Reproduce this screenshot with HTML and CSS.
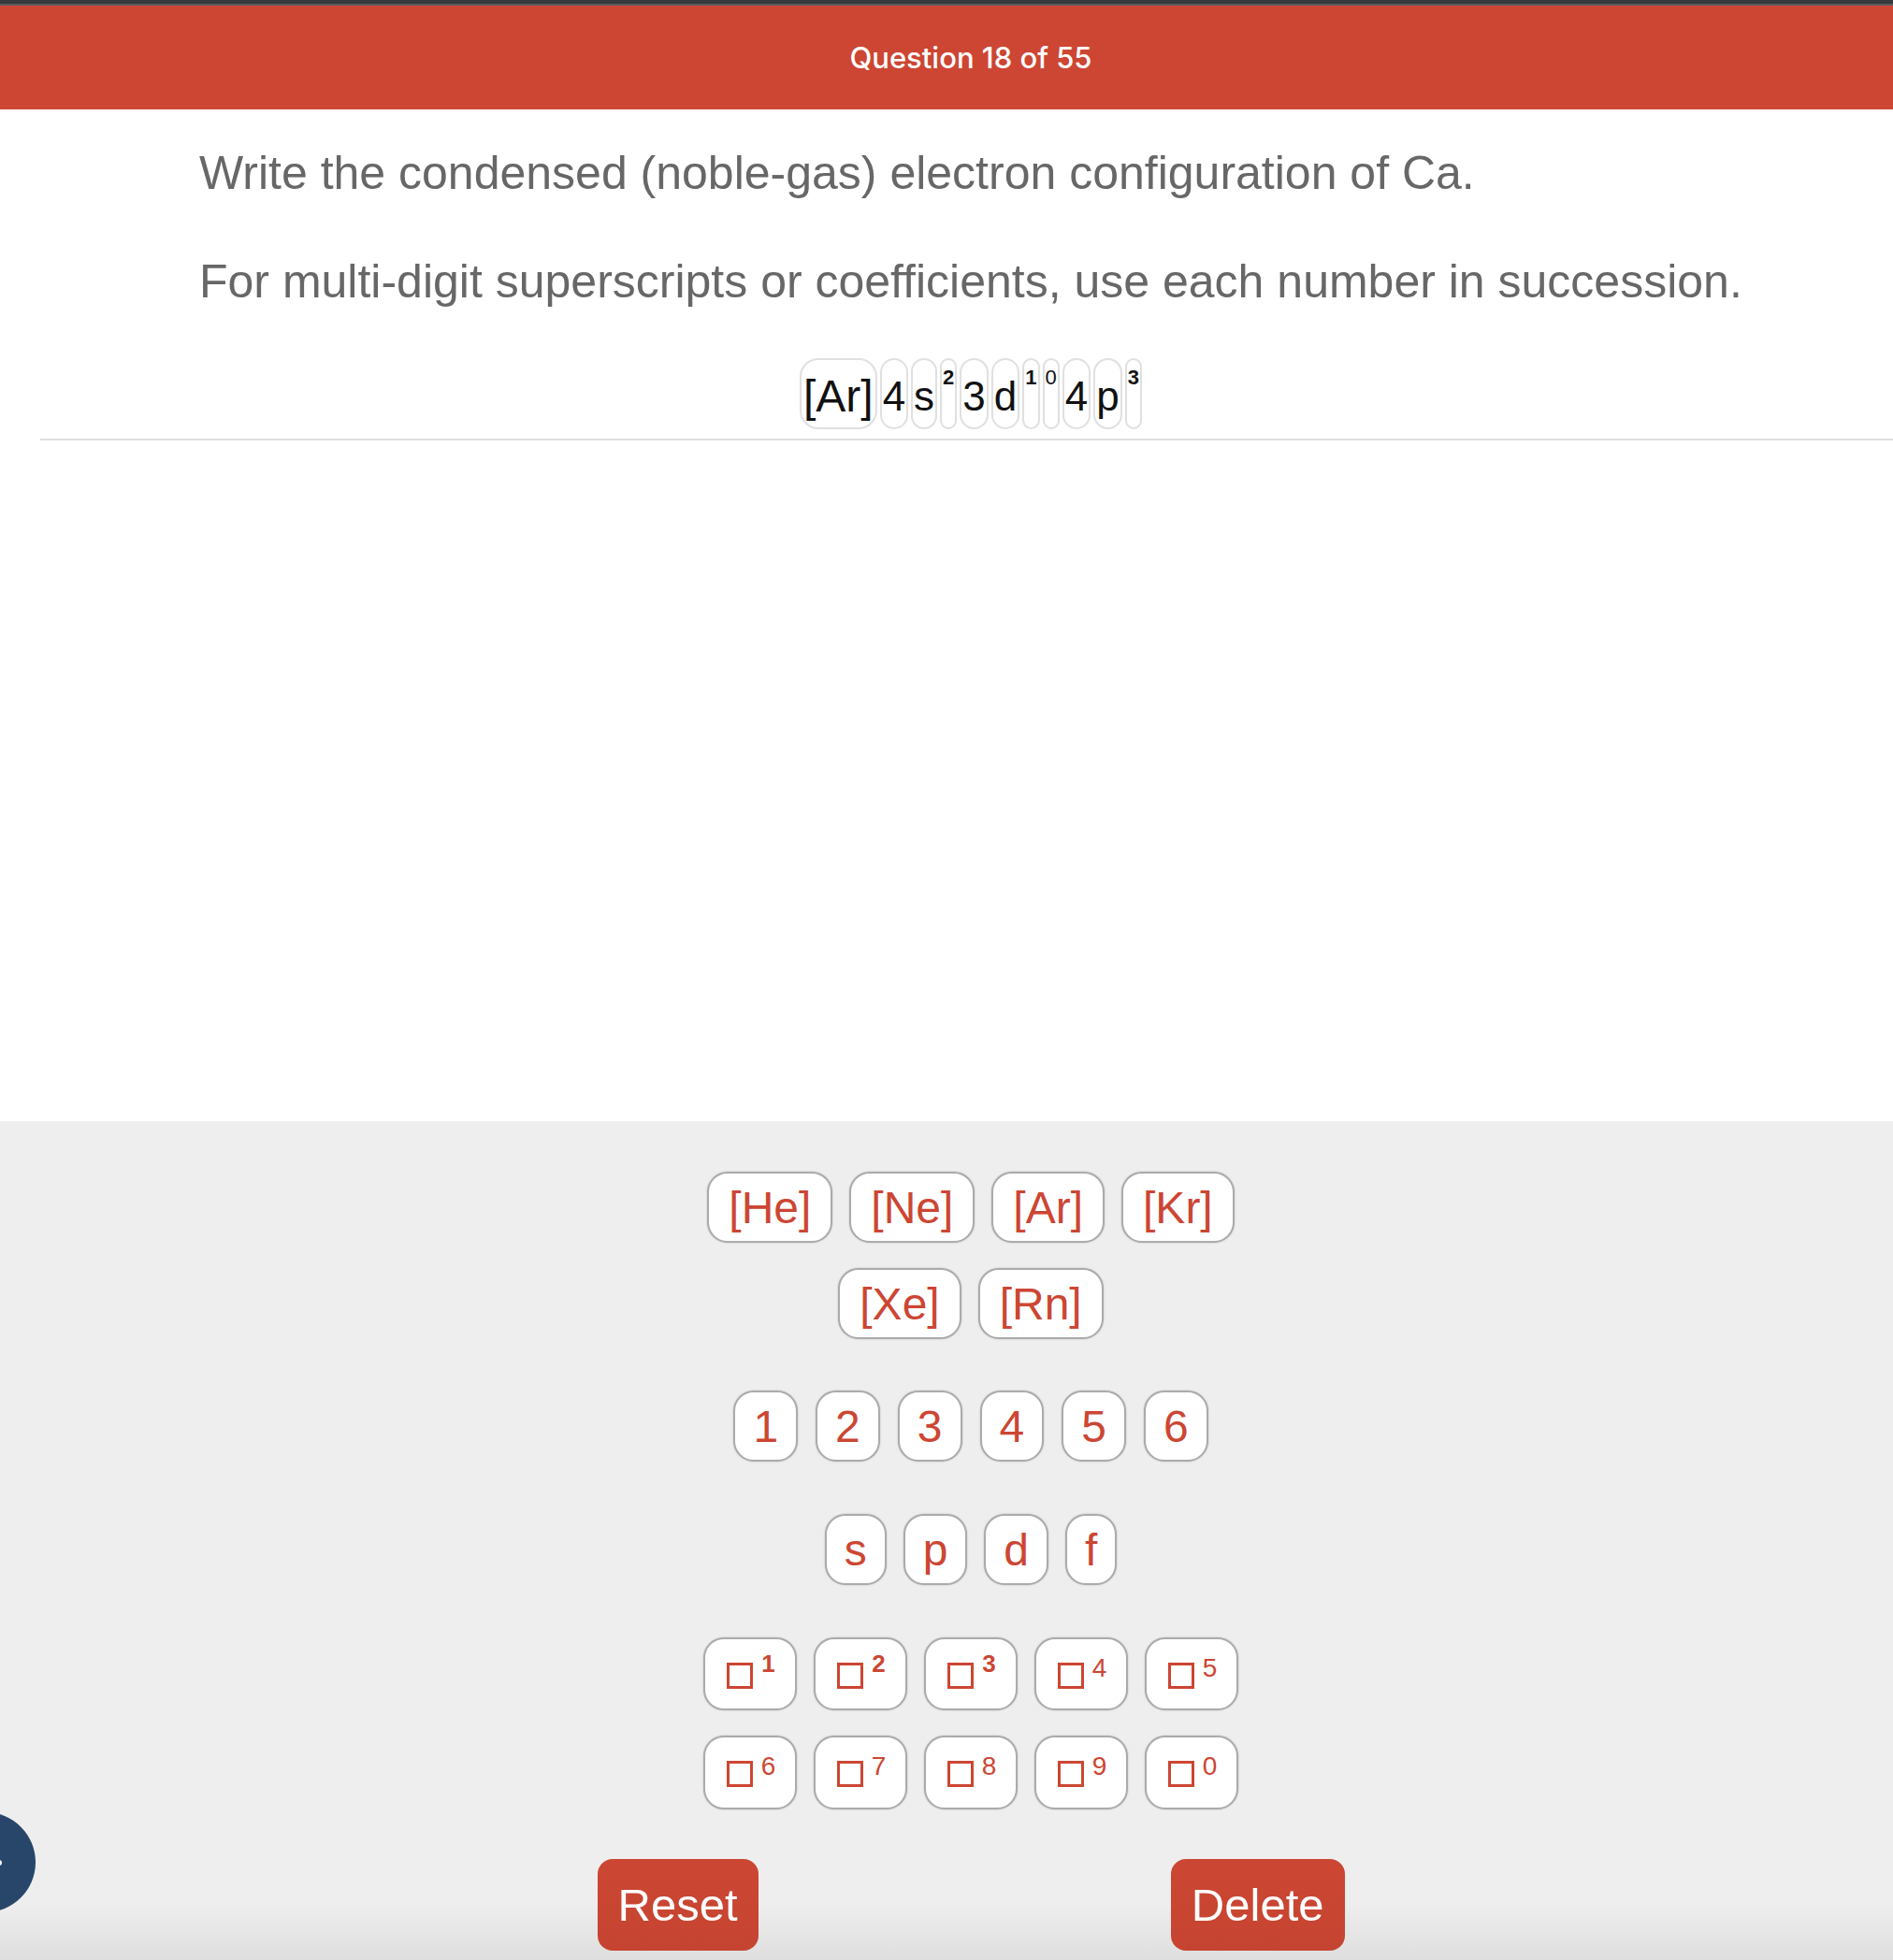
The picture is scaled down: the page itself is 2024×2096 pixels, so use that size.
FILE: index.html
```html
<!DOCTYPE html>
<html lang="en">
<head>
<meta charset="utf-8">
<title>Question 18 of 55</title>
<link rel="stylesheet" href="styles.css">
</head>
<body>
  <div class="topstrip"></div>
  <header class="header"><span class="header-title">Question 18 of 55</span></header>

  <main class="work">
    <p class="prompt prompt-first">Write the condensed (noble-gas) electron configuration of Ca.</p>
    <p class="prompt prompt-second">For multi-digit superscripts or coefficients, use each number in succession.</p>

    <div class="answer">
      <span class="cell cell-gas">[Ar]</span>
      <span class="cell">4</span>
      <span class="cell">s</span>
      <span class="cell cell-sup bold">2</span>
      <span class="cell">3</span>
      <span class="cell">d</span>
      <span class="cell cell-sup bold">1</span>
      <span class="cell cell-sup thin">0</span>
      <span class="cell">4</span>
      <span class="cell">p</span>
      <span class="cell cell-sup bold">3</span>
    </div>
    <div class="divider"></div>
  </main>

  <section class="keypad">
    <div class="row row-gas1">
      <button class="key key-gas">[He]</button>
      <button class="key key-gas">[Ne]</button>
      <button class="key key-gas">[Ar]</button>
      <button class="key key-gas">[Kr]</button>
    </div>
    <div class="row row-gas2">
      <button class="key key-gas">[Xe]</button>
      <button class="key key-gas">[Rn]</button>
    </div>
    <div class="row row-num">
      <button class="key key-single">1</button>
      <button class="key key-single">2</button>
      <button class="key key-single">3</button>
      <button class="key key-single">4</button>
      <button class="key key-single">5</button>
      <button class="key key-single">6</button>
    </div>
    <div class="row row-orb">
      <button class="key key-single">s</button>
      <button class="key key-single">p</button>
      <button class="key key-single">d</button>
      <button class="key key-single">f</button>
    </div>
    <div class="row row-sup1">
      <button class="key key-sup"><span class="sq"></span><span class="exp exp-bold">1</span></button>
      <button class="key key-sup"><span class="sq"></span><span class="exp exp-bold">2</span></button>
      <button class="key key-sup"><span class="sq"></span><span class="exp exp-bold">3</span></button>
      <button class="key key-sup"><span class="sq"></span><span class="exp exp-thin">4</span></button>
      <button class="key key-sup"><span class="sq"></span><span class="exp exp-thin">5</span></button>
    </div>
    <div class="row row-sup2">
      <button class="key key-sup"><span class="sq"></span><span class="exp exp-thin">6</span></button>
      <button class="key key-sup"><span class="sq"></span><span class="exp exp-thin">7</span></button>
      <button class="key key-sup"><span class="sq"></span><span class="exp exp-thin">8</span></button>
      <button class="key key-sup"><span class="sq"></span><span class="exp exp-thin">9</span></button>
      <button class="key key-sup"><span class="sq"></span><span class="exp exp-thin">0</span></button>
    </div>
    <div class="row row-actions">
      <button class="action">Reset</button>
      <button class="action">Delete</button>
    </div>
  </section>

  <div class="fab"><span class="fab-mark"></span></div>
</body>
</html>
```

FILE: styles.css
```css
* {
  box-sizing: border-box;
}

html, body {
  margin: 0;
  padding: 0;
}

body {
  min-height: 100vh;
  display: flex;
  flex-direction: column;
  font-family: "Liberation Sans", Arial, Helvetica, sans-serif;
  background: #ffffff;
  overflow: hidden;
}

.topstrip {
  height: 6px;
  background: linear-gradient(to bottom, #38393c 0, #38393c 4px, #5b5c5f 4px, #5b5c5f 6px);
}

.header {
  height: 111px;
  background: #cc4633;
  display: flex;
  align-items: center;
  justify-content: center;
  padding-left: 52px;
}

.header-title {
  font-family: Inter, "Liberation Sans", sans-serif;
  font-size: 31px;
  font-weight: 500;
  color: #ffffff;
}

.work {
  flex: 1;
  padding-left: 43px;
}

.prompt {
  margin: 0;
  padding-left: 170px;
  font-size: 50px;
  line-height: 60px;
  color: #676767;
}

.prompt-first {
  margin-top: 38px;
}

.prompt-second {
  margin-top: 56px;
}

.answer {
  margin-top: 52px;
  display: flex;
  justify-content: center;
  gap: 3px;
  padding-left: 9px;
}

.cell {
  display: block;
  height: 76px;
  padding: 0 1px;
  border: 2px solid #e0e0e0;
  border-radius: 16px;
  font-size: 44px;
  line-height: 78px;
  color: #111111;
  overflow: hidden;
}

.cell-gas {
  font-size: 48px;
  padding: 0 2px;
  border-radius: 20px;
}

.cell-sup {
  font-size: 22px;
  line-height: 22px;
  padding: 8px 1px 0;
  text-align: center;
}

.cell-sup.bold {
  font-weight: bold;
}

.cell-sup.thin {
  font-weight: normal;
}

.divider {
  margin-top: 10px;
  height: 2px;
  background: #dedede;
}

.keypad {
  background: linear-gradient(to bottom, #eeeeee 0, #eeeeee calc(100% - 60px), #dedede 100%);
  padding: 54px 0 10px 52px;
  display: flex;
  flex-direction: column;
  align-items: center;
}

.row {
  display: flex;
  justify-content: center;
  gap: 18px;
}

.row-gas2 {
  margin-top: 27px;
}

.row-num {
  margin-top: 55px;
  gap: 19px;
}

.row-orb {
  margin-top: 56px;
}

.row-sup1 {
  margin-top: 56px;
}

.row-sup2 {
  margin-top: 27px;
}

.row-actions {
  margin-top: 53px;
  width: 799px;
  justify-content: space-between;
}

.key {
  height: 76px;
  margin: 0;
  display: inline-flex;
  align-items: center;
  justify-content: center;
  background: #ffffff;
  border: 2px solid #ababab;
  border-radius: 22px;
  box-shadow: 0 0 2px rgba(0, 0, 0, 0.22);
  font-family: "Liberation Sans", Arial, Helvetica, sans-serif;
  font-size: 48px;
  color: #cc4633;
  cursor: pointer;
}

.key-gas {
  padding: 0 21px;
}

.key-single {
  padding: 0 19px;
}

.key-sup {
  width: 100px;
  height: 78px;
  padding: 0 0 0 2px;
  align-items: flex-start;
}

.row-sup2 .key-sup {
  height: 79px;
}

.sq {
  display: block;
  width: 28px;
  height: 28px;
  margin-top: 25px;
  border: 3px solid #cc4633;
}

.exp {
  display: block;
  margin-left: 9px;
}

.exp-bold {
  font-size: 26px;
  line-height: 26px;
  font-weight: bold;
  margin-top: 13px;
}

.exp-thin {
  font-size: 28px;
  line-height: 28px;
  font-weight: normal;
  margin-top: 17px;
}

.action {
  height: 98px;
  margin: 0;
  padding: 0 22px;
  border: none;
  border-radius: 16px;
  background: linear-gradient(to bottom, #cc4733, #c54431);
  font-family: "Liberation Sans", Arial, Helvetica, sans-serif;
  font-size: 49px;
  color: #ffffff;
  cursor: pointer;
}

.fab {
  position: fixed;
  left: -69px;
  bottom: 51px;
  width: 107px;
  height: 107px;
  border-radius: 50%;
  background: #27466a;
}

.fab-mark {
  position: absolute;
  left: 55px;
  top: 51px;
  width: 16px;
  height: 6px;
  border-radius: 3px;
  background: #ffffff;
}
```
